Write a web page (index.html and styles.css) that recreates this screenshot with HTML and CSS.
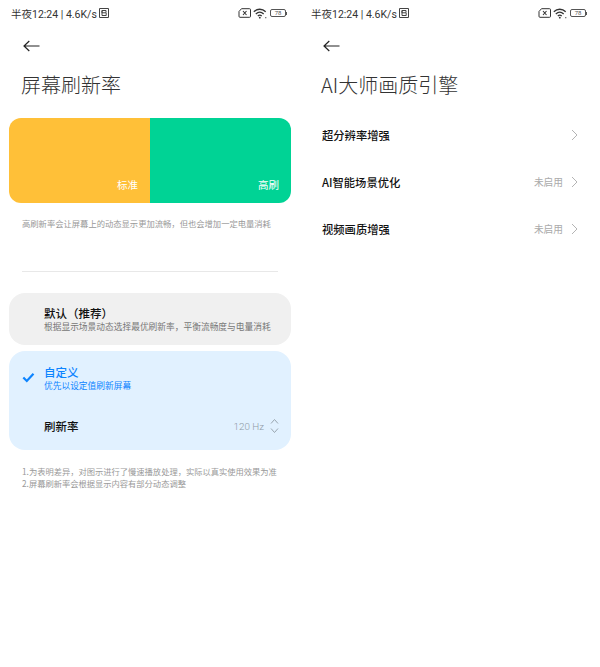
FILE: index.html
```html
<!DOCTYPE html>
<html lang="zh-CN">
<head>
<meta charset="utf-8">
<title>屏幕刷新率</title>
<link rel="stylesheet" href="styles.css">
</head>
<body>
<svg class="defs" width="0" height="0" aria-hidden="true">
  <symbol id="back" viewBox="0 0 17 12"><path d="M6.300 1 1 6l5.300 5M1 6h15.500" fill="none" stroke="#222" stroke-width="1.200"/></symbol>
  <symbol id="chev" viewBox="0 0 7 12"><path d="M1 1l5 5-5 5" fill="none" stroke="#b4b4b4" stroke-width="1"/></symbol>
  <symbol id="sim" viewBox="0 0 13 10"><path d="M3.500.7h8a1 1 0 0 1 1 1v6.600a1 1 0 0 1-1 1h-9.500a1 1 0 0 1-1-1V3.500z" fill="none" stroke="#333" stroke-width="1"/><path d="M5 3l3.500 4M8.500 3 5 7" stroke="#333" stroke-width="1.100"/></symbol>
  <symbol id="wifi" viewBox="0 0 14 11"><path d="M.8 3.800C4.300.4 9.200.4 12.700 3.800M2.800 5.900c2.400-2.200 5.500-2.200 7.900 0M4.800 8c1.300-1.100 2.600-1.100 3.900 0" fill="none" stroke="#333" stroke-width="1.300"/><circle cx="6.800" cy="9.700" r=".9" fill="#333"/><circle cx="12.800" cy="9.700" r=".6" fill="#333"/></symbol>
  <symbol id="hd" viewBox="0 0 10 10"><path d="M.5.500h9v9h-9z" fill="none" stroke="#444"/><path d="M3 2.500h4v2.300H3zM3 2.500v5M3 7.500h4.200V5" fill="none" stroke="#444"/></symbol>
</svg>
<main class="screens">
  <section class="screen">
    <div class="status">
      <div class="status-left"><span>半夜12:24 | 4.6K/s</span><svg class="ic-hd"><use href="#hd"/></svg></div>
      <div class="status-right">
        <svg class="ic-sim"><use href="#sim"/></svg>
        <svg class="ic-wifi"><use href="#wifi"/></svg>
        <div class="battery"><span class="battery-body">78</span><span class="battery-tip"></span></div>
      </div>
    </div>
    <svg class="back"><use href="#back"/></svg>
    <h1 class="title">屏幕刷新率</h1>
    <div class="demo">
      <div class="demo-half demo-std"><span>标准</span></div>
      <div class="demo-half demo-high"><span>高刷</span></div>
    </div>
    <p class="desc">高刷新率会让屏幕上的动态显示更加流畅，但也会增加一定电量消耗</p>
    <hr class="rule">
    <div class="option option-default">
      <div class="opt-title">默认（推荐）</div>
      <div class="opt-sub">根据显示场景动态选择最优刷新率，平衡流畅度与电量消耗</div>
    </div>
    <div class="option option-custom">
      <div class="custom-head">
        <svg class="check" viewBox="0 0 13 11"><path d="M1.300 5.500 4.800 9 11.500 1.800" fill="none" stroke="#0d84ff" stroke-width="2.200"/></svg>
        <div>
          <div class="opt-title opt-blue">自定义</div>
          <div class="opt-sub opt-blue">优先以设定值刷新屏幕</div>
        </div>
      </div>
      <div class="rate-row">
        <span class="rate-label">刷新率</span>
        <span class="rate-value">120 Hz</span>
        <svg class="updown" viewBox="0 0 9 16"><path d="M1 5.500 4.500 1.500 8 5.500M1 10.500l3.500 4 3.500-4" fill="none" stroke="#9aa6b0" stroke-width="1"/></svg>
      </div>
    </div>
    <div class="notes">
      <p>1.为表明差异，对图示进行了慢速播放处理，实际以真实使用效果为准</p>
      <p>2.屏幕刷新率会根据显示内容有部分动态调整</p>
    </div>
  </section>
  <section class="screen">
    <div class="status">
      <div class="status-left"><span>半夜12:24 | 4.6K/s</span><svg class="ic-hd"><use href="#hd"/></svg></div>
      <div class="status-right">
        <svg class="ic-sim"><use href="#sim"/></svg>
        <svg class="ic-wifi"><use href="#wifi"/></svg>
        <div class="battery"><span class="battery-body">78</span><span class="battery-tip"></span></div>
      </div>
    </div>
    <svg class="back"><use href="#back"/></svg>
    <h1 class="title">AI大师画质引擎</h1>
    <ul class="list">
      <li class="row"><span class="row-label">超分辨率增强</span><svg class="chev"><use href="#chev"/></svg></li>
      <li class="row"><span class="row-label">AI智能场景优化</span><span class="row-value">未启用</span><svg class="chev"><use href="#chev"/></svg></li>
      <li class="row"><span class="row-label">视频画质增强</span><span class="row-value">未启用</span><svg class="chev"><use href="#chev"/></svg></li>
    </ul>
  </section>
</main>
</body>
</html>
```

FILE: styles.css
```css
* { box-sizing: border-box; }
html, body { margin: 0; padding: 0; background: #fff; }
body { width: 600px; height: 667px; overflow: hidden; font-family: "Noto Sans CJK SC", "Noto Sans", sans-serif; color: #111; }
.defs { position: absolute; }
.screens { display: grid; grid-template-columns: 300px 300px; }
.screen { height: 667px; display: flex; flex-direction: column; }

.status { height: 26px; padding: 0 13px 0 11px; display: flex; justify-content: space-between; align-items: center; }
.status-left { display: flex; align-items: center; gap: 2px; font-size: 10.500px; color: #333; font-family: "Roboto", "Noto Sans CJK SC", sans-serif; }
.status-right { display: flex; align-items: center; }
.ic-hd { width: 10px; height: 10px; }
.ic-sim { width: 13px; height: 10px; margin-right: 2px; }
.ic-wifi { width: 14px; height: 11px; margin-right: 3px; }
.battery { display: flex; align-items: center; }
.battery-body { width: 16px; height: 8px; border: 1px solid #555; border-radius: 2px; font-size: 6px; line-height: 6px; text-align: center; color: #555; font-family: "Roboto", sans-serif; }
.battery-tip { width: 1px; height: 3px; background: #555; }

.back { width: 17px; height: 12px; margin: 14px 0 0 23px; display: block; }
.title { margin: 19px 0 0 21px; height: 28px; font-size: 20px; line-height: 28px; font-weight: 300; color: #333; font-family: "Noto Sans CJK SC", sans-serif; }

.demo { margin: 19px 9px 0; height: 85px; border-radius: 12px; overflow: hidden; display: grid; grid-template-columns: 141px 141px; }
.demo-half { display: flex; align-items: flex-end; justify-content: flex-end; padding: 0 12px 10px 0; color: #fff; font-size: 10.500px; line-height: 16px; }
.demo-std { background: #ffc038; }
.demo-high { background: #00d395; }

.desc { margin: 13px 22px 0; font-size: 8.300px; line-height: 14px; color: #999; white-space: nowrap; }
.rule { margin: 41px 22px 0; border: 0; border-top: 1px solid #e8e8e8; }

.option { margin: 21px 9px 0; border-radius: 16px; }
.option-default { height: 52px; background: #f0f0f0; padding: 12px 0 0 35px; }
.option-custom { margin-top: 6px; height: 99px; background: #e1f1ff; padding: 12px 12px 0 13px; }
.opt-title { font-size: 11.500px; line-height: 16px; font-weight: 500; color: #111; }
.opt-sub { font-size: 8.730px; line-height: 11px; color: #777; white-space: nowrap; }
.opt-title.opt-blue, .opt-sub.opt-blue { color: #0d84ff; }
.custom-head { display: flex; align-items: center; gap: 9px; height: 28px; }
.check { width: 13px; height: 11px; flex: none; }
.rate-row { margin-top: 25px; padding-left: 22px; display: flex; align-items: center; height: 20px; }
.rate-label { font-size: 11.500px; font-weight: 500; flex: 1; }
.rate-value { font-family: "Roboto", sans-serif; font-size: 9.800px; font-weight: 300; color: #8f9ba6; margin-right: 6px; }
.updown { width: 9px; height: 16px; }

.notes { margin: 15px 22px 0; font-size: 8.270px; line-height: 12px; color: #999; white-space: nowrap; }
.notes p { margin: 0; }

.list { list-style: none; margin: 12px 0 0; padding: 0 22px; }
.row { height: 47px; display: flex; align-items: center; }
.row-label { flex: 1; font-size: 11.300px; font-weight: 500; color: #111; }
.row-value { font-size: 9.700px; color: #aaa; margin-right: 8px; }
.chev { width: 7px; height: 12px; }
```
